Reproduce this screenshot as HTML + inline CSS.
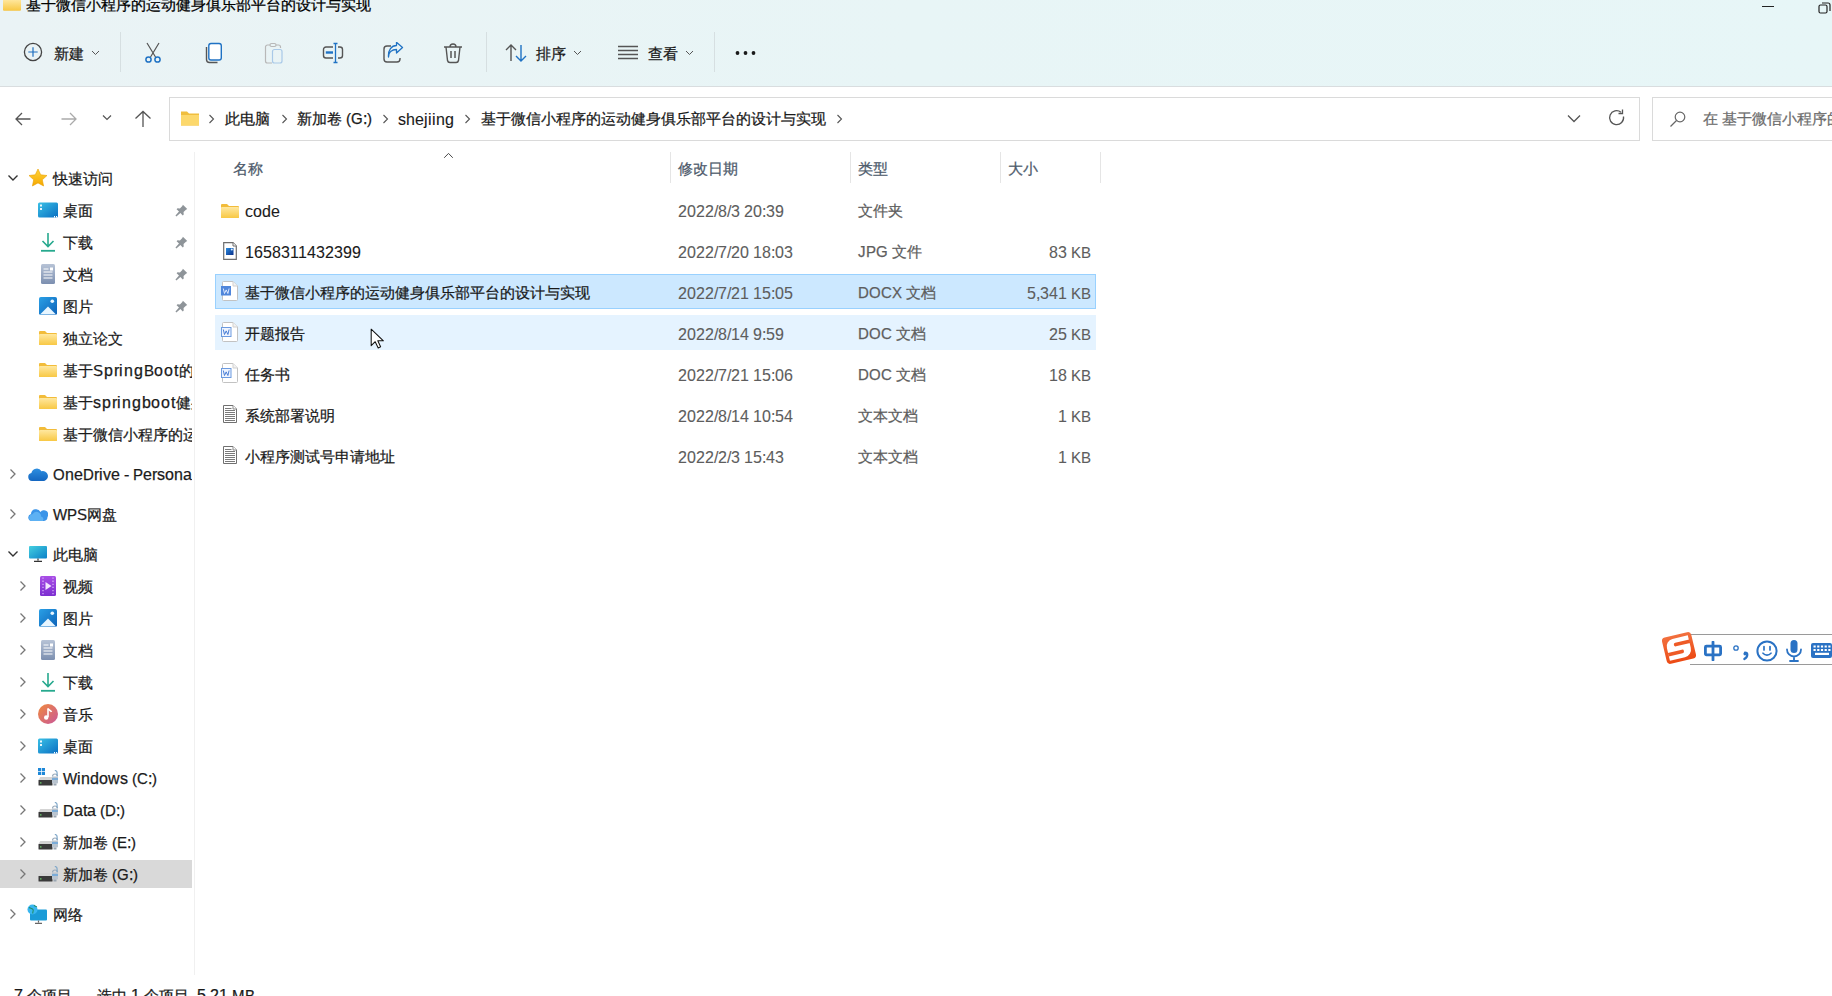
<!DOCTYPE html>
<html><head><meta charset="utf-8">
<style>
@font-face{font-family:"LS";src:local("Liberation Sans");size-adjust:106%;unicode-range:U+0000-024F,U+2000-206F}
@font-face{font-family:"LSU";src:local("Liberation Sans");size-adjust:98%;unicode-range:U+0028-0029,U+0041-005A}
*{box-sizing:border-box;margin:0;padding:0}
html,body{width:1832px;height:996px;overflow:hidden;background:#fff;font-family:"LSU","LS","Liberation Sans",sans-serif;color:#1a1a1a}
.a{position:absolute;white-space:nowrap}
#tb{position:absolute;left:0;top:0;width:1832px;height:87px;background:linear-gradient(90deg,#eaf3f5 0%,#e8f5f6 50%,#e7f6f7 100%);border-bottom:1px solid #d9dddf}
.t15{font-size:15px;line-height:18px;-webkit-text-stroke:0.25px currentColor}
.sep{position:absolute;width:1px;background:#d6dfe1}
.nav .a{font-size:15px;line-height:18px}
.hdr{font-size:15px;color:#4c607a;line-height:18px}
.row{position:absolute;left:215px;width:881px;height:37px}
.cell{position:absolute;font-size:15px;line-height:18px;white-space:nowrap}
.g{color:#5d5d5d}
.nl{-webkit-text-stroke:0.1px currentColor}
.hd{color:#4d5a6b}
</style></head><body>
<div id="tb"></div>

<svg width="0" height="0" style="position:absolute">
<defs>
<linearGradient id="gDesk" x1="0" y1="0" x2="1" y2="1"><stop offset="0" stop-color="#3ac0e6"/><stop offset="1" stop-color="#0a6fc2"/></linearGradient>
<linearGradient id="gPic" x1="0" y1="0" x2="1" y2="1"><stop offset="0" stop-color="#2aa0e6"/><stop offset="1" stop-color="#0d62b8"/></linearGradient>
<linearGradient id="gDoc" x1="0" y1="0" x2="0" y2="1"><stop offset="0" stop-color="#b7c3d6"/><stop offset="1" stop-color="#7c8fb0"/></linearGradient>
<linearGradient id="gFold" x1="0" y1="0" x2="0" y2="1"><stop offset="0" stop-color="#ffe8a0"/><stop offset="1" stop-color="#f8c844"/></linearGradient>
<linearGradient id="gStar" x1="0" y1="0" x2="0" y2="1"><stop offset="0" stop-color="#ffd43a"/><stop offset="1" stop-color="#f5a800"/></linearGradient>
<linearGradient id="gVid" x1="0" y1="0" x2="0" y2="1"><stop offset="0" stop-color="#a94ee6"/><stop offset="1" stop-color="#7c2fd0"/></linearGradient>
<linearGradient id="gMus" x1="0" y1="0" x2="1" y2="1"><stop offset="0" stop-color="#f08a3c"/><stop offset="1" stop-color="#c9579a"/></linearGradient>
<linearGradient id="gPC" x1="0" y1="0" x2="1" y2="1"><stop offset="0" stop-color="#45d0e0"/><stop offset="1" stop-color="#0a80c8"/></linearGradient>
<linearGradient id="gOD" x1="0" y1="0" x2="0" y2="1"><stop offset="0" stop-color="#2d8ee0"/><stop offset="1" stop-color="#1466c0"/></linearGradient>
<symbol id="chevR" viewBox="0 0 8 12"><path d="M1.5 1.5l4.5 4.5-4.5 4.5" fill="none" stroke="#777" stroke-width="1.3"/></symbol>
<symbol id="chevD" viewBox="0 0 12 8"><path d="M1.5 1.5l4.5 4.5 4.5-4.5" fill="none" stroke="#333" stroke-width="1.4"/></symbol>
<symbol id="star" viewBox="0 0 20 20"><path d="M10 1l2.7 5.8 6.3.7-4.7 4.3 1.3 6.2L10 14.9 4.4 18l1.3-6.2L1 7.5l6.3-.7z" fill="url(#gStar)" stroke="#e9a000" stroke-width=".6" stroke-linejoin="round"/></symbol>
<symbol id="desk" viewBox="0 0 20 16"><rect x="0" y="0.5" width="20" height="15" rx="1.5" fill="url(#gDesk)"/><rect x="2" y="2.5" width="2" height="2" fill="#fff" opacity=".9"/><rect x="2" y="6" width="2" height="2" fill="#fff" opacity=".9"/><rect x="16" y="14" width="1" height="1.5" fill="#fff"/><rect x="18" y="14" width="1" height="1.5" fill="#fff"/></symbol>
<symbol id="dl" viewBox="0 0 14 20"><path d="M7 1v13M1.5 9l5.5 5.5L12.5 9" fill="none" stroke="#27a98e" stroke-width="1.6"/><path d="M0 18.8h14" stroke="#27a98e" stroke-width="1.8"/></symbol>
<symbol id="doc" viewBox="0 0 14 20"><rect x="0" y="0" width="14" height="20" rx="1.5" fill="url(#gDoc)"/><path d="M2.5 5h5M2.5 8h9M2.5 11h9M2.5 14h9" stroke="#fff" stroke-width="1"/><rect x="9" y="3.5" width="3" height="3" fill="#fff"/></symbol>
<symbol id="pic" viewBox="0 0 18 18"><rect x="0" y="0" width="18" height="18" rx="1.8" fill="url(#gPic)"/><circle cx="13.3" cy="4.3" r="1.8" fill="#e8f6ff"/><path d="M1 17.5L9 9.5l8 8z" fill="#e8f6ff"/></symbol>
<symbol id="fold" viewBox="0 0 18 14"><path d="M0 1a1 1 0 0 1 1-1h5l2 2h9a1 1 0 0 1 1 1v10a1 1 0 0 1-1 1H1a1 1 0 0 1-1-1z" fill="#f2bc3a"/><path d="M0 4a1 1 0 0 1 1-1h16a1 1 0 0 1 1 1v9a1 1 0 0 1-1 1H1a1 1 0 0 1-1-1z" fill="url(#gFold)"/></symbol>
<symbol id="od" viewBox="0 0 20 13"><path d="M4 13a4 4 0 0 1-.6-7.9A5.5 5.5 0 0 1 13.5 3.2 4.6 4.6 0 0 1 16.2 13z" fill="url(#gOD)"/></symbol>
<symbol id="wps" viewBox="0 0 20 13"><path d="M3.5 13a3.5 3.5 0 0 1-.5-6.9A5 5 0 0 1 12.5 4 4 4 0 0 1 19.5 9 4 4 0 0 1 16 13z" fill="#3a94e8"/><path d="M3.5 13a3.5 3.5 0 0 1 1-6.8 4.5 4.5 0 0 1 8.5 2.3A3 3 0 0 1 15 13z" fill="#62b4f4" opacity=".9"/></symbol>
<symbol id="pc" viewBox="0 0 18 16"><rect x="0" y="0" width="18" height="12.5" rx="1" fill="url(#gPC)"/><path d="M9 12.5v2M5 15.3h8" stroke="#333" stroke-width="1.2"/></symbol>
<symbol id="vid" viewBox="0 0 16 20"><rect x="0" y="0" width="16" height="20" rx="1.5" fill="url(#gVid)"/><path d="M3 1.5v17M13 1.5v17" stroke="#d8b4f8" stroke-width="1.2" stroke-dasharray="1.3 1.8"/><path d="M5.5 6v8l6-4z" fill="#f3e6ff"/></symbol>
<symbol id="mus" viewBox="0 0 20 20"><circle cx="10" cy="10" r="10" fill="url(#gMus)"/><path d="M10 4.5v8.5" stroke="#fff" stroke-width="1.6"/><circle cx="8.2" cy="13.5" r="2.2" fill="#fff"/><path d="M10 4.5c1 2 3 2 3.5 3.5" fill="none" stroke="#fff" stroke-width="1.6"/></symbol>
<symbol id="drv" viewBox="0 0 20 16"><path d="M0.5 10l1.8-3h12v3z" fill="#d4d4d4"/><rect x="0.5" y="10" width="14" height="5.5" rx=".6" fill="#3a3a3a"/><rect x="2" y="12.3" width="1.5" height="1.2" fill="#6dd56d"/><path d="M14.5 6.5a2.5 2.5 0 0 1 5 0" fill="none" stroke="#9ab" stroke-width="1.2"/><path d="M16.8 0.5a2.3 2.3 0 0 1 2.3 2.3V6" fill="none" stroke="#7fa7c9" stroke-width="1.2"/><rect x="14" y="6.5" width="6" height="7" rx=".8" fill="#b9c4cf"/><path d="M14 9h6" stroke="#5aa0dd" stroke-width="1.3"/><rect x="15.5" y="13.5" width="3" height="2" fill="#9aa6b2"/></symbol>
<symbol id="win" viewBox="0 0 6 6"><rect x="0" y="0" width="2.7" height="2.7" fill="#1e88d8"/><rect x="3.3" y="0" width="2.7" height="2.7" fill="#1e88d8"/><rect x="0" y="3.3" width="2.7" height="2.7" fill="#1e88d8"/><rect x="3.3" y="3.3" width="2.7" height="2.7" fill="#1e88d8"/></symbol>
<symbol id="net" viewBox="0 0 20 20"><rect x="3" y="5.5" width="17" height="11" rx="1" fill="#1a9bd7"/><path d="M11.5 16.5v2M8 19.3h7" stroke="#666" stroke-width="1.2"/><circle cx="5.5" cy="5.5" r="5" fill="#38b6f0"/><path d="M2 3.5c2 1 3 .5 4 2s-1 2.5 0 4M7 1.2c.5 1 2 1.3 3 1.5" fill="none" stroke="#1a7d2e" stroke-width="1.1" opacity=".7"/></symbol>
<symbol id="pin" viewBox="0 0 14 14"><path d="M8.5 0.8l4.7 4.7-1.4.6-2.6 2.6.2 2.6-1 1L5.8 9.7 1.5 13.5.5 12.5 4.3 8.2 1.7 5.6l1-1 2.6.2 2.6-2.6z" fill="#8e9499"/></symbol>
<symbol id="word" viewBox="0 0 17 20"><path d="M2.5 0.5h9.5l4.5 4.5v13.5a1 1 0 0 1-1 1h-13a1 1 0 0 1-1-1v-17a1 1 0 0 1 1-1z" fill="#fff" stroke="#c2c2c2"/><path d="M12 0.5v4.5h4.5" fill="#f2f2f2" stroke="#d0d0d0"/><rect x="0.5" y="5.5" width="9.5" height="9" fill="#eef4ff" stroke="#6c9be0"/><path d="M2.3 7.5l1.2 5 1.7-3.6 1.7 3.6 1.2-5" fill="none" stroke="#4a7fd6" stroke-width="1"/></symbol>
<symbol id="txt" viewBox="0 0 14 18"><path d="M0.5 0.5h9.5l3.5 3.5v13.5H0.5z" fill="#fff" stroke="#707070" stroke-width="1"/><path d="M10 0.5v3.5h3.5" fill="#fff" stroke="#8a8a8a" stroke-width="1"/><path d="M2 3.5h6.5M2 5.5h10M2 7.5h10M2 9.5h10M2 11.5h10M2 13.5h10M2 15.5h10" stroke="#7a7a7a" stroke-width="1"/></symbol>
<symbol id="jpg" viewBox="0 0 14 18"><path d="M0.7 0.7h9.3l3.3 3.3v13.3H0.7z" fill="#fff" stroke="#6e6e6e" stroke-width="1.2"/><path d="M10 0.7v3.3h3.3" fill="#fff" stroke="#6e6e6e" stroke-width="1"/><defs><linearGradient id="gJ" x1="0" y1="0" x2="1" y2="1"><stop offset="0" stop-color="#2a8de0"/><stop offset="1" stop-color="#0b2f8a"/></linearGradient></defs><rect x="3" y="6" width="7.5" height="7" fill="url(#gJ)"/><circle cx="8.8" cy="7.5" r="1" fill="#e0f2ff"/></symbol>
<symbol id="wordsel" viewBox="0 0 17 20"><path d="M2.5 0.5h9.5l4.5 4.5v13.5a1 1 0 0 1-1 1h-13a1 1 0 0 1-1-1v-17a1 1 0 0 1 1-1z" fill="#fff" stroke="#c2c2c2"/><path d="M12 0.5v4.5h4.5" fill="#f2f2f2" stroke="#d0d0d0"/><rect x="0" y="5" width="10" height="9.5" fill="#4f86db"/><path d="M2.3 7.5l1.2 5 1.7-3.6 1.7 3.6 1.2-5" fill="none" stroke="#dbe8ff" stroke-width="1"/></symbol></defs></svg>

<!-- file list -->
<div class="a" style="left:215px;top:274px;width:881px;height:35px;background:#cce8ff;border:1px solid #99d1ff"></div>
<div class="a" style="left:215px;top:315px;width:881px;height:35px;background:#e5f3ff"></div>
<svg class="a" style="left:443px;top:152px" width="11" height="7"><path d="M1.2 5.8L5.5 1.4l4.3 4.4" fill="none" stroke="#4a4a4a" stroke-width="1"/></svg>
<div class="a t15 hd" style="left:233px;top:160px">名称</div>
<div class="a" style="left:670px;top:152px;width:1px;height:31px;background:#e5e5e5"></div>
<div class="a t15 hd" style="left:678px;top:160px">修改日期</div>
<div class="a" style="left:850px;top:152px;width:1px;height:31px;background:#e5e5e5"></div>
<div class="a t15 hd" style="left:858px;top:160px">类型</div>
<div class="a" style="left:1000px;top:152px;width:1px;height:31px;background:#e5e5e5"></div>
<div class="a t15 hd" style="left:1008px;top:160px">大小</div>
<div class="a" style="left:1100px;top:152px;width:1px;height:31px;background:#e5e5e5"></div>
<svg class="a" style="left:221px;top:204px" width="18" height="14"><use href="#fold"/></svg><div class="a t15 nl" style="left:245px;top:203px">code</div><div class="a t15 g nl" style="left:678px;top:203px">2022/8/3 20:39</div><div class="a t15 g" style="left:858px;top:202px">文件夹</div>
<svg class="a" style="left:223px;top:242px" width="14" height="18"><use href="#jpg"/></svg><div class="a t15 nl" style="left:245px;top:244px">1658311432399</div><div class="a t15 g nl" style="left:678px;top:244px">2022/7/20 18:03</div><div class="a t15 g" style="left:858px;top:243px">JPG 文件</div><div class="a t15 g nl" style="right:741px;top:244px">83 KB</div>
<svg class="a" style="left:221px;top:281px" width="17" height="20"><use href="#wordsel"/></svg><div class="a t15" style="left:245px;top:284px">基于微信小程序的运动健身俱乐部平台的设计与实现</div><div class="a t15 g nl" style="left:678px;top:285px">2022/7/21 15:05</div><div class="a t15 g" style="left:858px;top:284px">DOCX 文档</div><div class="a t15 g nl" style="right:741px;top:285px">5,341 KB</div>
<svg class="a" style="left:221px;top:322px" width="17" height="20"><use href="#word"/></svg><div class="a t15" style="left:245px;top:325px">开题报告</div><div class="a t15 g nl" style="left:678px;top:326px">2022/8/14 9:59</div><div class="a t15 g" style="left:858px;top:325px">DOC 文档</div><div class="a t15 g nl" style="right:741px;top:326px">25 KB</div>
<svg class="a" style="left:221px;top:363px" width="17" height="20"><use href="#word"/></svg><div class="a t15" style="left:245px;top:366px">任务书</div><div class="a t15 g nl" style="left:678px;top:367px">2022/7/21 15:06</div><div class="a t15 g" style="left:858px;top:366px">DOC 文档</div><div class="a t15 g nl" style="right:741px;top:367px">18 KB</div>
<svg class="a" style="left:223px;top:405px" width="14" height="18"><use href="#txt"/></svg><div class="a t15" style="left:245px;top:407px">系统部署说明</div><div class="a t15 g nl" style="left:678px;top:408px">2022/8/14 10:54</div><div class="a t15 g" style="left:858px;top:407px">文本文档</div><div class="a t15 g nl" style="right:741px;top:408px">1 KB</div>
<svg class="a" style="left:223px;top:446px" width="14" height="18"><use href="#txt"/></svg><div class="a t15" style="left:245px;top:448px">小程序测试号申请地址</div><div class="a t15 g nl" style="left:678px;top:449px">2022/2/3 15:43</div><div class="a t15 g" style="left:858px;top:448px">文本文档</div><div class="a t15 g nl" style="right:741px;top:449px">1 KB</div>
<!-- title -->
<svg class="a" style="left:3px;top:-4px" width="18" height="15"><use href="#fold"/></svg>
<div class="a t15" style="left:26px;top:-4px;color:#000">基于微信小程序的运动健身俱乐部平台的设计与实现</div>
<div class="a" style="left:1762px;top:6px;width:12px;height:1px;background:#222"></div>
<svg class="a" style="left:1818px;top:2px" width="14" height="12"><rect x="1" y="3" width="8" height="8" rx="1.5" fill="none" stroke="#222" stroke-width="1.2"/><path d="M4 1h6a2 2 0 0 1 2 2v6" fill="none" stroke="#222" stroke-width="1.2"/></svg>

<!-- toolbar -->
<svg class="a" style="left:22px;top:41px" width="22" height="22" viewBox="0 0 22 22"><circle cx="11" cy="11" r="8.6" fill="none" stroke="#444" stroke-width="1.3"/><path d="M11 6.3v9.4M6.3 11h9.4" stroke="#1f6fc0" stroke-width="1.2"/></svg>
<div class="a t15" style="left:54px;top:45px">新建</div>
<svg class="a" style="left:91px;top:50px" width="9" height="6"><path d="M1 1l3.5 3.5L8 1" fill="none" stroke="#555" stroke-width="1"/></svg>
<div class="sep" style="left:120px;top:32px;height:40px"></div>
<svg class="a" style="left:142px;top:42px" width="22" height="22" viewBox="0 0 22 22"><path d="M5 1l8.5 14M17 1L8.5 15" stroke="#555" stroke-width="1.2" fill="none"/><circle cx="6.5" cy="17.5" r="2.6" fill="none" stroke="#1f72c4" stroke-width="1.5"/><circle cx="15.5" cy="17.5" r="2.6" fill="none" stroke="#1f72c4" stroke-width="1.5"/></svg>
<svg class="a" style="left:203px;top:42px" width="22" height="22" viewBox="0 0 22 22"><path d="M3.5 5v12.5a3 3 0 0 0 3 3h8" fill="none" stroke="#555" stroke-width="1.4"/><rect x="5.8" y="1.5" width="12.5" height="16.5" rx="2.2" fill="#fff" stroke="#1f72c4" stroke-width="1.4"/></svg>
<svg class="a" style="left:263px;top:42px" width="22" height="22" viewBox="0 0 22 22"><path d="M7 3H4.5A2 2 0 0 0 2.5 5v14a2 2 0 0 0 2 2H9M13 3h2.5a2 2 0 0 1 2 2v1" fill="none" stroke="#b8b8b8" stroke-width="1.2"/><rect x="7" y="1.5" width="6" height="3" rx="1.5" fill="none" stroke="#b8b8b8" stroke-width="1.2"/><rect x="9.5" y="7.5" width="9.5" height="13.5" rx="2" fill="none" stroke="#a9c9e8" stroke-width="1.2"/></svg>
<svg class="a" style="left:322px;top:42px" width="22" height="22" viewBox="0 0 22 22"><path d="M11 5H4a2.5 2.5 0 0 0-2.5 2.5v6A2.5 2.5 0 0 0 4 16h7M16 5h2a2.5 2.5 0 0 1 2.5 2.5v6A2.5 2.5 0 0 1 18 16h-2" fill="none" stroke="#555" stroke-width="1.4"/><path d="M3.8 10.5h7.2" stroke="#1f72c4" stroke-width="2.4"/><path d="M13.5 1.5v19M11.5 1.5h4M11.5 20.5h4" stroke="#1f72c4" stroke-width="1.3"/></svg>
<svg class="a" style="left:382px;top:42px" width="22" height="22" viewBox="0 0 22 22"><path d="M9 4H5a3 3 0 0 0-3 3v10a3 3 0 0 0 3 3h10a3 3 0 0 0 3-3v-1" fill="none" stroke="#555" stroke-width="1.4"/><path d="M6.5 15c0-5 3.5-7.5 8-7.5V11l6-5.5-6-5.2V3.5c-5 0-8.5 4.5-8 11.5z" fill="none" stroke="#1f72c4" stroke-width="1.3" stroke-linejoin="round"/></svg>
<svg class="a" style="left:442px;top:42px" width="22" height="22" viewBox="0 0 22 22"><path d="M2 5h18M8 5a3 3 0 0 1 6 0" fill="none" stroke="#555" stroke-width="1.4"/><path d="M4 5l1.5 13.5a2.5 2.5 0 0 0 2.5 2h6a2.5 2.5 0 0 0 2.5-2L18 5" fill="none" stroke="#555" stroke-width="1.4"/><path d="M9 9v7M13 9v7" stroke="#555" stroke-width="1.5"/></svg>
<div class="sep" style="left:486px;top:32px;height:40px"></div>
<svg class="a" style="left:505px;top:43px" width="22" height="20" viewBox="0 0 22 20"><path d="M6 18V2M1 7l5-5 5 5" fill="none" stroke="#555" stroke-width="1.4"/><path d="M16 2v16M11 13l5 5 5-5" fill="none" stroke="#1f72c4" stroke-width="1.4"/></svg>
<div class="a t15" style="left:536px;top:45px">排序</div>
<svg class="a" style="left:573px;top:50px" width="9" height="6"><path d="M1 1l3.5 3.5L8 1" fill="none" stroke="#555" stroke-width="1"/></svg>
<svg class="a" style="left:617px;top:45px" width="22" height="16" viewBox="0 0 22 16"><path d="M1 1.5h20M1 5.5h20M1 9.5h20M1 13.5h20" stroke="#555" stroke-width="1.3"/></svg>
<div class="a t15" style="left:648px;top:45px">查看</div>
<svg class="a" style="left:685px;top:50px" width="9" height="6"><path d="M1 1l3.5 3.5L8 1" fill="none" stroke="#555" stroke-width="1"/></svg>
<div class="sep" style="left:714px;top:32px;height:40px"></div>
<svg class="a" style="left:735px;top:50px" width="22" height="6"><circle cx="2.5" cy="3" r="1.9" fill="#1a1a1a"/><circle cx="10.5" cy="3" r="1.9" fill="#1a1a1a"/><circle cx="18.5" cy="3" r="1.9" fill="#1a1a1a"/></svg>

<!-- address row -->
<svg class="a" style="left:14px;top:111px" width="18" height="16" viewBox="0 0 18 16"><path d="M16.5 8H2.5M8 2L2 8l6 6" fill="none" stroke="#555" stroke-width="1.3"/></svg>
<svg class="a" style="left:60px;top:111px" width="18" height="16" viewBox="0 0 18 16"><path d="M1.5 8h14M10 2l6 6-6 6" fill="none" stroke="#aaa" stroke-width="1.3"/></svg>
<svg class="a" style="left:102px;top:114px" width="10" height="7"><path d="M1 1.5l4 4 4-4" fill="none" stroke="#555" stroke-width="1.2"/></svg>
<svg class="a" style="left:134px;top:110px" width="18" height="18" viewBox="0 0 18 18"><path d="M9 17V1.5M1.5 8.5L9 1.5l7.5 7" fill="none" stroke="#555" stroke-width="1.3"/></svg>
<div class="a" style="left:169px;top:97px;width:1471px;height:44px;border:1px solid #dadada;background:#fff"></div>
<svg class="a" style="left:180px;top:110px" width="20" height="16" viewBox="0 0 20 16"><path d="M1 1.5h6l2 2h10v12H1z" fill="#f0be3e"/><path d="M1 5h18v10.5H1z" fill="#fcd86c"/></svg>
<svg class="a" style="left:208px;top:114px" width="7" height="10"><path d="M1.5 1l4 4-4 4" fill="none" stroke="#555" stroke-width="1.1"/></svg>
<div class="a t15" style="left:225px;top:110px">此电脑</div>
<svg class="a" style="left:281px;top:114px" width="7" height="10"><path d="M1.5 1l4 4-4 4" fill="none" stroke="#555" stroke-width="1.1"/></svg>
<div class="a t15" style="left:297px;top:110px">新加卷 (G:)</div>
<svg class="a" style="left:382px;top:114px" width="7" height="10"><path d="M1.5 1l4 4-4 4" fill="none" stroke="#555" stroke-width="1.1"/></svg>
<div class="a t15 nl" style="left:398px;top:111px">shejiing</div>
<svg class="a" style="left:464px;top:114px" width="7" height="10"><path d="M1.5 1l4 4-4 4" fill="none" stroke="#555" stroke-width="1.1"/></svg>
<div class="a t15" style="left:481px;top:110px">基于微信小程序的运动健身俱乐部平台的设计与实现</div>
<svg class="a" style="left:836px;top:114px" width="7" height="10"><path d="M1.5 1l4 4-4 4" fill="none" stroke="#555" stroke-width="1.1"/></svg>
<svg class="a" style="left:1567px;top:114px" width="14" height="9"><path d="M1 1.5l6 6 6-6" fill="none" stroke="#555" stroke-width="1.3"/></svg>
<svg class="a" style="left:1607px;top:108px" width="20" height="20" viewBox="0 0 20 20"><path d="M16.5 8.5A7 7 0 1 1 14 4.2" fill="none" stroke="#555" stroke-width="1.3"/><path d="M15.5 1.5v4h-4" fill="none" stroke="#555" stroke-width="1.3"/></svg>
<div class="a" style="left:1652px;top:97px;width:200px;height:44px;border:1px solid #dadada;background:#fff"></div>
<svg class="a" style="left:1669px;top:111px" width="18" height="17" viewBox="0 0 18 17"><circle cx="11" cy="6" r="4.8" fill="none" stroke="#666" stroke-width="1.2"/><path d="M7.5 9.5L1.5 15.5" stroke="#666" stroke-width="1.2"/></svg>
<div class="a t15" style="left:1703px;top:110px;color:#6b6b6b">在 基于微信小程序的运动健身俱乐部平台的设计与实现</div>
<div class="a" style="left:0;top:860px;width:192px;height:28px;background:#d9d9d9"></div>
<div class="a" style="left:194px;top:152px;width:1px;height:823px;background:#f0f0f0"></div>
<div id="navclip" class="a" style="left:0;top:141px;width:192px;height:840px;overflow:hidden">
<svg class="a" style="left:7px;top:33px" width="12" height="8"><use href="#chevD"/></svg><svg class="a" style="left:28px;top:27px" width="20" height="20"><use href="#star"/></svg><div class="a t15 nt" style="left:53px;top:29px">快速访问</div>
<svg class="a" style="left:38px;top:61px" width="20" height="16"><use href="#desk"/></svg><div class="a t15 nt" style="left:63px;top:61px">桌面</div><svg class="a" style="left:175px;top:63px" width="13" height="13"><use href="#pin"/></svg>
<svg class="a" style="left:41px;top:91px" width="14" height="20"><use href="#dl"/></svg><div class="a t15 nt" style="left:63px;top:93px">下载</div><svg class="a" style="left:175px;top:95px" width="13" height="13"><use href="#pin"/></svg>
<svg class="a" style="left:41px;top:123px" width="14" height="20"><use href="#doc"/></svg><div class="a t15 nt" style="left:63px;top:125px">文档</div><svg class="a" style="left:175px;top:127px" width="13" height="13"><use href="#pin"/></svg>
<svg class="a" style="left:39px;top:156px" width="18" height="18"><use href="#pic"/></svg><div class="a t15 nt" style="left:63px;top:157px">图片</div><svg class="a" style="left:175px;top:159px" width="13" height="13"><use href="#pin"/></svg>
<svg class="a" style="left:39px;top:190px" width="18" height="14"><use href="#fold"/></svg><div class="a t15 nt" style="left:63px;top:189px">独立论文</div>
<svg class="a" style="left:39px;top:222px" width="18" height="14"><use href="#fold"/></svg><div class="a t15 nt" style="left:63px;top:221px">基于<span style="letter-spacing:.75px">SpringBoot</span>的运动健身俱乐部</div>
<svg class="a" style="left:39px;top:254px" width="18" height="14"><use href="#fold"/></svg><div class="a t15 nt" style="left:63px;top:253px">基于<span style="letter-spacing:.75px">springboot</span>健身房管理系统</div>
<svg class="a" style="left:39px;top:286px" width="18" height="14"><use href="#fold"/></svg><div class="a t15 nt" style="left:63px;top:285px">基于微信小程序的运动健身俱乐部</div>
<svg class="a" style="left:9px;top:327px" width="8" height="12"><use href="#chevR"/></svg><svg class="a" style="left:28px;top:327px" width="20" height="13"><use href="#od"/></svg><div class="a t15 nt" style="left:53px;top:325px">OneDrive - Personal</div>
<svg class="a" style="left:9px;top:367px" width="8" height="12"><use href="#chevR"/></svg><svg class="a" style="left:28px;top:367px" width="20" height="13"><use href="#wps"/></svg><div class="a t15 nt" style="left:53px;top:365px">WPS网盘</div>
<svg class="a" style="left:7px;top:409px" width="12" height="8"><use href="#chevD"/></svg><svg class="a" style="left:29px;top:405px" width="18" height="16"><use href="#pc"/></svg><div class="a t15 nt" style="left:53px;top:405px">此电脑</div>
<svg class="a" style="left:19px;top:439px" width="8" height="12"><use href="#chevR"/></svg><svg class="a" style="left:40px;top:435px" width="16" height="20"><use href="#vid"/></svg><div class="a t15 nt" style="left:63px;top:437px">视频</div>
<svg class="a" style="left:19px;top:471px" width="8" height="12"><use href="#chevR"/></svg><svg class="a" style="left:39px;top:468px" width="18" height="18"><use href="#pic"/></svg><div class="a t15 nt" style="left:63px;top:469px">图片</div>
<svg class="a" style="left:19px;top:503px" width="8" height="12"><use href="#chevR"/></svg><svg class="a" style="left:41px;top:499px" width="14" height="20"><use href="#doc"/></svg><div class="a t15 nt" style="left:63px;top:501px">文档</div>
<svg class="a" style="left:19px;top:535px" width="8" height="12"><use href="#chevR"/></svg><svg class="a" style="left:41px;top:531px" width="14" height="20"><use href="#dl"/></svg><div class="a t15 nt" style="left:63px;top:533px">下载</div>
<svg class="a" style="left:19px;top:567px" width="8" height="12"><use href="#chevR"/></svg><svg class="a" style="left:38px;top:563px" width="20" height="20"><use href="#mus"/></svg><div class="a t15 nt" style="left:63px;top:565px">音乐</div>
<svg class="a" style="left:19px;top:599px" width="8" height="12"><use href="#chevR"/></svg><svg class="a" style="left:38px;top:597px" width="20" height="16"><use href="#desk"/></svg><div class="a t15 nt" style="left:63px;top:597px">桌面</div>
<svg class="a" style="left:19px;top:631px" width="8" height="12"><use href="#chevR"/></svg><svg class="a" style="left:38px;top:629px" width="20" height="16"><use href="#drv"/></svg><svg class="a" style="left:38px;top:627px" width="7" height="7"><use href="#win"/></svg><div class="a t15 nt" style="left:63px;top:629px">Windows (C:)</div>
<svg class="a" style="left:19px;top:663px" width="8" height="12"><use href="#chevR"/></svg><svg class="a" style="left:38px;top:661px" width="20" height="16"><use href="#drv"/></svg><div class="a t15 nt" style="left:63px;top:661px">Data (D:)</div>
<svg class="a" style="left:19px;top:695px" width="8" height="12"><use href="#chevR"/></svg><svg class="a" style="left:38px;top:693px" width="20" height="16"><use href="#drv"/></svg><div class="a t15 nt" style="left:63px;top:693px">新加卷 (E:)</div>
<svg class="a" style="left:19px;top:727px" width="8" height="12"><use href="#chevR"/></svg><svg class="a" style="left:38px;top:725px" width="20" height="16"><use href="#drv"/></svg><div class="a t15 nt" style="left:63px;top:725px">新加卷 (G:)</div>
<svg class="a" style="left:9px;top:767px" width="8" height="12"><use href="#chevR"/></svg><svg class="a" style="left:27px;top:763px" width="20" height="20"><use href="#net"/></svg><div class="a t15 nt" style="left:53px;top:765px">网络</div>
</div>
<div class="a t15" style="left:14px;top:987px">7 个项目</div><div class="a t15" style="left:97px;top:987px">选中 1 个项目&nbsp;&nbsp;5.21 MB</div>

<!-- IME -->
<div class="a" style="left:1690px;top:634px;width:150px;height:31px;background:#fff;border-top:1px solid #9a9a9a;border-bottom:1px solid #9a9a9a"></div>
<svg class="a" style="left:1659px;top:627px" width="40" height="41" viewBox="0 0 40 41"><defs><linearGradient id="gSg" x1="0" y1="0" x2="0" y2="1"><stop offset="0" stop-color="#f2703e"/><stop offset="1" stop-color="#ec4a14"/></linearGradient></defs><g transform="translate(20 21) rotate(-13.5) translate(-15 -13.5)"><rect x="0" y="0" width="30" height="27" rx="3.5" fill="url(#gSg)"/><path d="M3.2 11A7.5 7.5 0 0 1 10.7 3.2H26.5V16A7.8 7.8 0 0 1 18.7 23.8H3.2z" fill="#fff"/><path d="M27 7.6H12.5a1.8 1.8 0 0 0 0 3.6H27z" fill="#ee5a26"/><path d="M3 15.8H17.3a1.8 1.8 0 0 1 0 3.6H3z" fill="#ee5a26"/></g></svg>
<svg class="a" style="left:1703px;top:641px" width="20" height="20" viewBox="0 0 20 20"><rect x="2.4" y="5.2" width="15.2" height="8.6" rx="1" fill="none" stroke="#2a72c4" stroke-width="2.8"/><path d="M10 1v18" stroke="#2a72c4" stroke-width="2.8" stroke-linecap="round"/></svg>
<svg class="a" style="left:1731px;top:641px" width="20" height="20" viewBox="0 0 20 20"><circle cx="5" cy="7" r="2.2" fill="none" stroke="#2a72c4" stroke-width="1.3"/><path d="M14 11.5c1.5 0 2.3.9 2.3 2.2 0 2-1.3 3.3-3 4.3" fill="none" stroke="#2a72c4" stroke-width="2.2" stroke-linecap="round"/><circle cx="14" cy="12.8" r="1.6" fill="#2a72c4"/></svg>
<svg class="a" style="left:1755px;top:639px" width="24" height="24" viewBox="0 0 24 24"><circle cx="12" cy="12" r="9.6" fill="none" stroke="#2a72c4" stroke-width="2"/><path d="M9 7.5v3.5M15 7.5v3.5" stroke="#2a72c4" stroke-width="1.7" stroke-linecap="round"/><path d="M8 14.2c2.2 2.5 5.8 2.5 8 0" fill="none" stroke="#2a72c4" stroke-width="1.6" stroke-linecap="round"/></svg>
<svg class="a" style="left:1785px;top:639px" width="18" height="24" viewBox="0 0 18 24"><rect x="5.5" y="1" width="7" height="13" rx="3.5" fill="#2a72c4"/><path d="M2 10.5a7 7 0 0 0 14 0M9 17.5v4M5 22h8" fill="none" stroke="#2a72c4" stroke-width="1.8" stroke-linecap="round"/></svg>
<svg class="a" style="left:1810px;top:642px" width="22" height="17" viewBox="0 0 22 17"><rect x="1" y="1" width="21" height="15" rx="2" fill="#2a72c4"/><g fill="#fff"><rect x="3.5" y="3.5" width="2.2" height="2"/><rect x="7.2" y="3.5" width="2.2" height="2"/><rect x="10.9" y="3.5" width="2.2" height="2"/><rect x="14.6" y="3.5" width="2.2" height="2"/><rect x="18.3" y="3.5" width="2.2" height="2"/><rect x="3.5" y="7" width="2.2" height="2"/><rect x="7.2" y="7" width="2.2" height="2"/><rect x="10.9" y="7" width="2.2" height="2"/><rect x="14.6" y="7" width="2.2" height="2"/><rect x="18.3" y="7" width="2.2" height="2"/><rect x="5" y="10.8" width="14" height="2.2"/></g></svg>
<!-- cursor -->
<svg class="a" style="left:370px;top:328px" width="16" height="22" viewBox="0 0 16 22"><path d="M1.2 1.2v16.5l4-4 3 6.2 2.4-1.1-2.8-6h5.6z" fill="#fff" stroke="#111" stroke-width="1.05" stroke-linejoin="round"/></svg>
</body></html>
